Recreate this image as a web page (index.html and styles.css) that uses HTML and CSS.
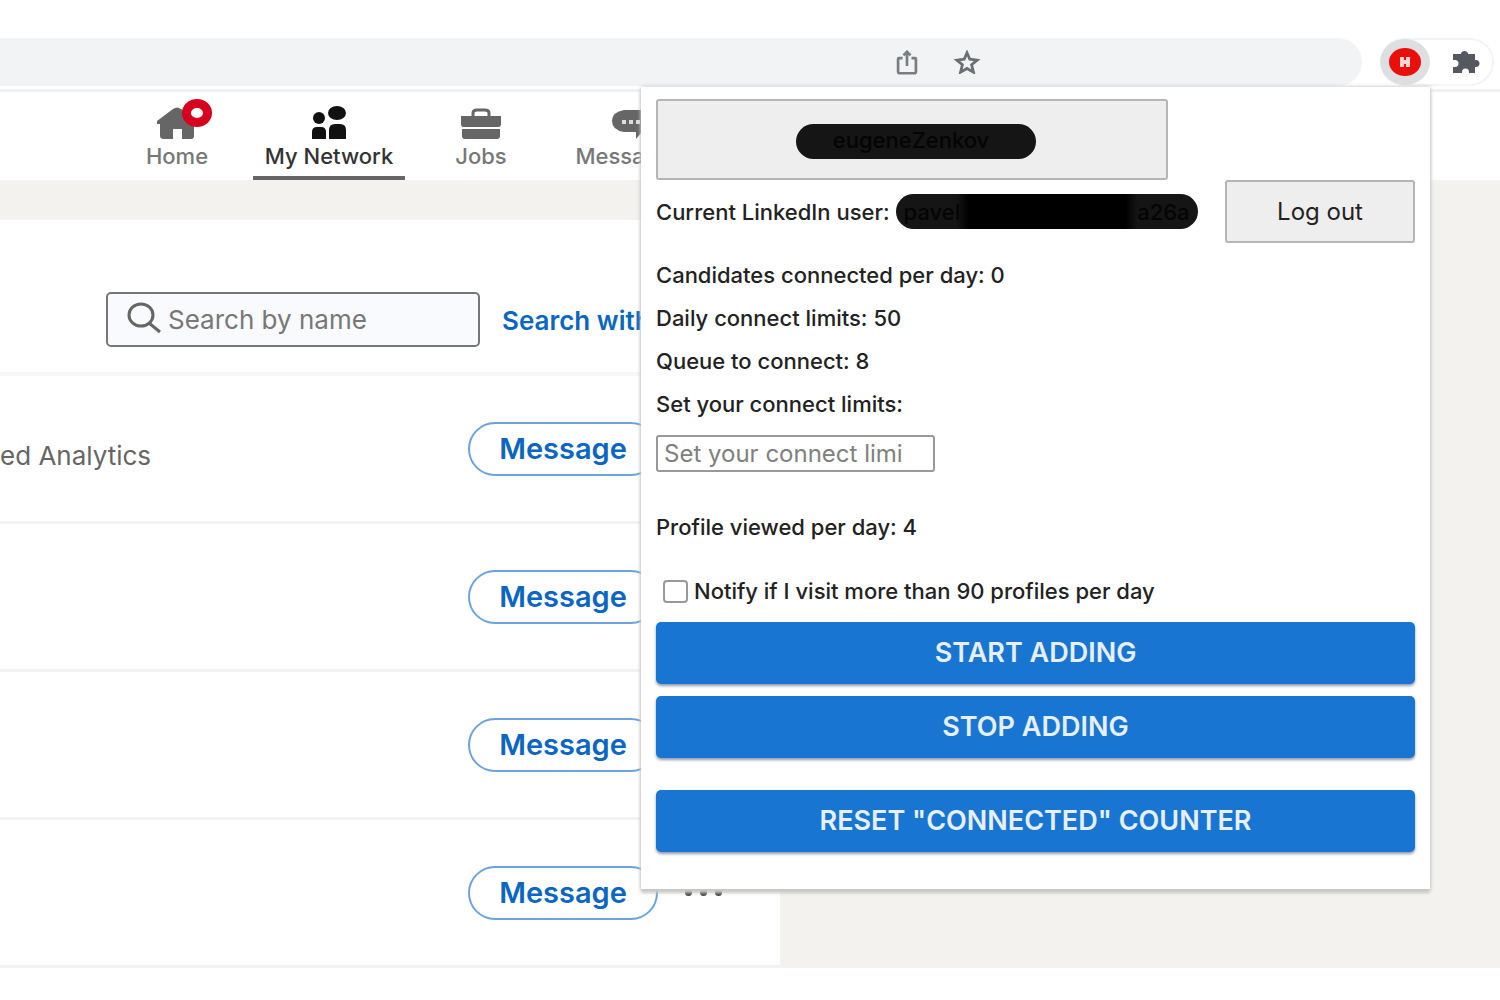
FILE: index.html
```html
<!DOCTYPE html>
<html lang="en">
<head>
<meta charset="utf-8">
<title>My Network</title>
<link rel="stylesheet" href="styles.css">
</head>
<body>
<div class="browser">
  <header class="toolbar">
    <div class="address">
      <button class="icon-button" aria-label="Share">
        <svg width="22" height="25" viewBox="0 0 24 28" fill="none" stroke="#7a7d80" stroke-width="3"><path d="M7 9H3a1 1 0 0 0-1 1v14a2 2 0 0 0 2 2h16a2 2 0 0 0 2-2V10a1 1 0 0 0-1-1h-4M12 18V3M8 6l4-4 4 4"/></svg>
      </button>
      <button class="icon-button" aria-label="Bookmark">
        <svg width="28" height="24" viewBox="0 0 28 26" fill="none" stroke="#6b6e72" stroke-width="3"><path d="M14 3l3 7 8 1-6 5 2 8-7-4-7 4 2-8-6-5 8-1z"/></svg>
      </button>
    </div>
    <div class="extensions">
      <button class="icon-button active" aria-label="Connection helper">
        <svg width="32" height="30" viewBox="0 0 32 30"><ellipse cx="16" cy="15" rx="16" ry="14" fill="#ea0f0b"/><path d="M13 10v10M19 10v10M13 15h6" stroke="#ffd6d2" stroke-width="4"/></svg>
      </button>
      <button class="icon-button" aria-label="Extensions">
        <svg width="28" height="26" viewBox="0 0 28 26" fill="#55595f"><path d="M1 5h8V4a4 4 0 0 1 7 0v1h7v6h1a3 3 0 0 1 0 7h-1v6h-6v-1a3 3 0 0 0-7 0v1H1v-6h2a3 3 0 0 0 0-7H1z"/></svg>
      </button>
    </div>
  </header>

  <nav class="nav">
    <a class="nav-item" href="#">
      <span class="nav-icon">
        <svg width="40" height="34" viewBox="0 0 40 34" fill="#666"><path d="M0 15L16 3q4-3 8 0l16 12v3h-3v12q0 3-3 3h-9v-10h-9v10H7q-4 0-4-3V18H0z"/></svg>
        <span class="badge"></span>
      </span>
      Home
    </a>
    <a class="nav-item current" href="#">
      <span class="nav-icon">
        <svg width="36" height="34" viewBox="0 0 36 34" fill="#111"><circle cx="8" cy="12" r="6"/><ellipse cx="26" cy="7" rx="9" ry="7"/><path d="M1 33v-7q0-5 5-5h4q5 0 5 5v7zM18 33V24q0-6 6-6h5q6 0 6 6v9z"/></svg>
      </span>
      My Network
    </a>
    <a class="nav-item" href="#">
      <span class="nav-icon">
        <svg width="40" height="32" viewBox="0 0 40 32" fill="#666"><path d="M12 8V5q0-3 4-3h8q4 0 4 3v3" fill="none" stroke="#666" stroke-width="3"/><path d="M0 8h40v9q-1 2-2 2H2q-1 0-2-2zM1 21h38v7q0 3-3 3H4q-3 0-3-3z"/></svg>
      </span>
      Jobs
    </a>
    <a class="nav-item" href="#">
      <span class="nav-icon">
        <svg width="42" height="32" viewBox="0 0 42 32" fill="#666"><path d="M12 2h18q12 2 12 11T30 24l-6 7v-7H12Q0 22 0 13T12 2z"/><path d="M10 12h4v4h-4zM17 12h4v4h-4zM24 12h4v4h-4z" fill="#ddd"/></svg>
      </span>
      Messaging
    </a>
  </nav>

  <main class="page">
    <section class="card">
      <div class="search-row">
        <label class="search">
          <svg width="34" height="32" viewBox="0 0 34 32" fill="none" stroke="#666" stroke-width="3"><ellipse cx="14" cy="13" rx="12" ry="11"/><path d="M22 21l11 9"/></svg>
          <input type="text" placeholder="Search by name" aria-label="Search by name">
        </label>
        <a class="filters" href="#">Search with</a>
      </div>
      <div class="person"><span class="headline">ed Analytics</span><button class="message">Message</button><button class="more" aria-label="More"><i></i><i></i><i></i></button></div>
      <div class="person"><button class="message">Message</button><button class="more" aria-label="More"><i></i><i></i><i></i></button></div>
      <div class="person"><button class="message">Message</button><button class="more" aria-label="More"><i></i><i></i><i></i></button></div>
      <div class="person"><button class="message">Message</button><button class="more" aria-label="More"><i></i><i></i><i></i></button></div>
    </section>
  </main>

  <aside class="popup">
    <button class="gray account"><span class="redacted name">eugeneZenkov</span></button>
    <div class="user-row">
      <span>Current LinkedIn user:</span>
      <span class="redacted user"><span>pavel</span><span>a26a</span></span>
      <button class="gray logout">Log out</button>
    </div>
    <div class="stats">
      <p>Candidates connected per day: 0</p>
      <p>Daily connect limits: 50</p>
      <p>Queue to connect: 8</p>
      <p><label for="limit">Set your connect limits:</label></p>
    </div>
    <div class="limit"><input id="limit" type="text" placeholder="Set your connect limi"></div>
    <p class="viewed">Profile viewed per day: 4</p>
    <label class="notify"><input type="checkbox">Notify if I visit more than 90 profiles per day</label>
    <div class="actions">
      <button class="primary">START ADDING</button>
      <button class="primary">STOP ADDING</button>
      <button class="primary reset">RESET "CONNECTED" COUNTER</button>
    </div>
  </aside>
</div>
</body>
</html>
```
FILE: styles.css
```css
* { box-sizing: border-box; }
body { margin: 0; background: #fff; color: #222; font: 500 22px/24px Inter, "Liberation Sans", sans-serif; }
button, input { font: inherit; color: inherit; }
button { padding: 0; border: 0; background: none; }
a { text-decoration: none; }
p { margin: 0; }
svg { display: block; flex: none; }

.browser { position: relative; overflow: hidden; padding-top: 38px; }

/* Browser toolbar */
.toolbar { display: flex; gap: 18px; height: 54px; padding-right: 6px; border-bottom: 3px solid #f1f1f2; }
.address { flex: 1; display: flex; justify-content: flex-end; gap: 35px; height: 48px; padding-right: 381px; background: #f1f3f4; border-radius: 0 24px 24px 0; }
.icon-button { display: flex; align-items: center; justify-content: center; }
.extensions { display: flex; align-items: center; gap: 22px; height: 48px; padding-right: 12px; border: 2px solid #f4f4f5; border-left: 0; border-radius: 24px; }
.active { width: 50px; height: 46px; border-radius: 50%; background: #dedfe0; }

/* Site navigation */
.nav { display: flex; height: 88px; padding-left: 101px; background: #fff; }
.nav-item { display: flex; flex-direction: column; align-items: center; width: 152px; padding-top: 12px; color: #777; }
.nav-icon { position: relative; display: flex; align-items: flex-end; height: 36px; margin-bottom: 4px; }
.current { color: #333; border-bottom: 4px solid #666; }
.badge { position: absolute; left: 25px; top: -5px; width: 30px; height: 28px; border: 9px solid #d6001f; border-radius: 50%; background: #fff; }

/* Connections list */
.page { padding-top: 40px; background: #f3f2ee; }
.card { width: 780px; background: #fff; }
.search-row { display: flex; align-items: flex-start; gap: 22px; height: 156px; padding: 72px 0 0 106px; border-bottom: 4px solid #f7f7f7; }
.search { display: flex; align-items: center; gap: 7px; width: 374px; height: 55px; padding: 0 19px; border: 2px solid #777; border-radius: 5px; background: #f9fafd; }
.search svg { margin-bottom: 4px; }
.search input { flex: 1; min-width: 0; padding: 0; border: 0; outline: 0; background: none; font-size: 26px; font-weight: 400; }
.search input::placeholder { color: #777; opacity: 1; }
.filters { width: 140px; padding-top: 17px; overflow: hidden; color: #0a66c2; font-size: 26px; font-weight: 600; white-space: nowrap; }
.person { display: flex; align-items: center; justify-content: flex-end; gap: 27px; height: 148px; padding-right: 58px; border-bottom: 3px solid #f2f2f2; }
.headline { margin-right: auto; padding-top: 14px; color: #666; font-size: 26px; font-weight: 400; }
.message { width: 190px; height: 54px; border: 2px solid #6ca3dd; border-radius: 27px; color: #0a66c2; font-size: 29px; font-weight: 600; }
.more { display: flex; gap: 8px; }
.more i { width: 7px; height: 7px; border-radius: 50%; background: #444; }

/* Extension popup */
.popup { position: absolute; top: 87px; right: 70px; width: 789px; padding: 12px 15px 37px; background: #fff; box-shadow: 0 4px 3px #c8c8c6, 0 0 4px #bbb; }
.gray { display: flex; align-items: center; justify-content: center; border: 2px solid #b5b5b5; border-radius: 3px; background: #eee; }
.account { width: 512px; height: 81px; }
.redacted { display: flex; align-items: center; justify-content: center; height: 35px; border-radius: 18px; background: #151515; color: #040404; }
.name { width: 240px; margin: 4px 0 0 8px; padding: 0 10px 4px 0; }
.user-row { display: flex; align-items: center; height: 63px; white-space: nowrap; }
.user { justify-content: space-between; width: 302px; margin-left: 6px; padding: 0 8px; background: linear-gradient(90deg, #151515 20%, #000 24% 76%, #151515 80%); }
.logout { width: 190px; height: 63px; margin-left: auto; font-size: 24px; font-weight: 400; }
.stats { padding-top: 11px; line-height: 43px; }
.limit { display: flex; padding-top: 9px; }
.limit input { width: 279px; height: 37px; padding: 0 6px; border: 2px solid #999; border-radius: 3px; font-size: 24px; font-weight: 400; }
.limit input::placeholder { color: #808080; opacity: 1; }
.viewed { padding: 43px 0 40px; }
.notify { display: flex; align-items: center; gap: 6px; padding-left: 7px; }
.notify input { appearance: none; width: 25px; height: 23px; margin: 0; border: 2px solid #999; border-radius: 4px; background: #fff; }
.actions { display: flex; flex-direction: column; gap: 12px; padding-top: 19px; }
.primary { height: 62px; border-radius: 5px; background: #1876d2; color: #e6effb; font-size: 27px; font-weight: 600; box-shadow: 0 2px 3px #8d9caf; }
.reset { margin-top: 20px; }
```
